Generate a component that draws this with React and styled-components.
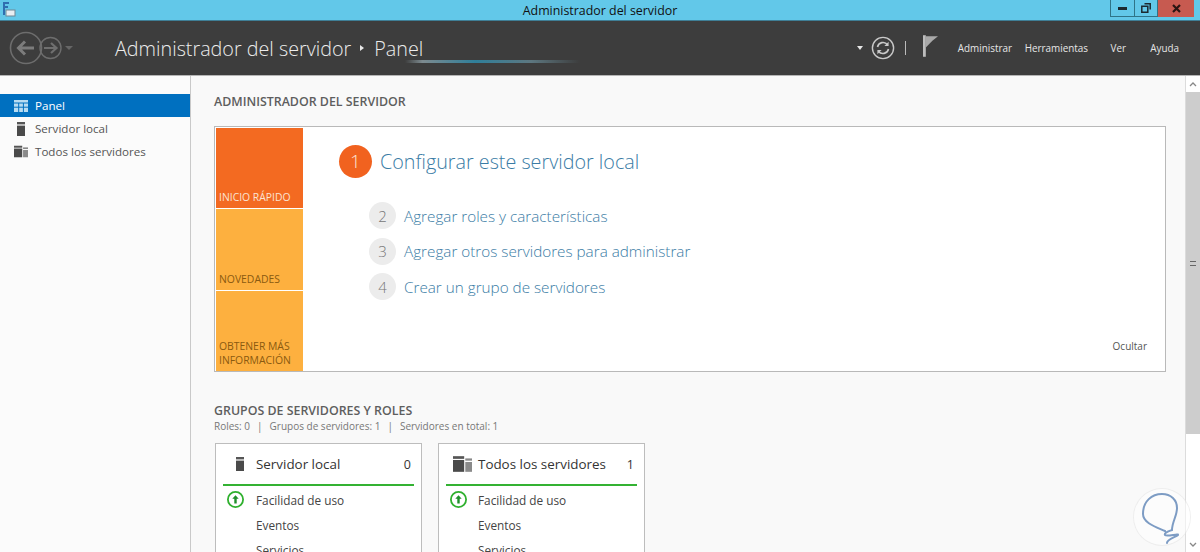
import styled, { createGlobalStyle } from "styled-components"

const Global = createGlobalStyle`
html, body { margin: 0; padding: 0; height: 100%; overflow: hidden; }
body { font-family: "Open Sans", "Noto Sans", sans-serif; background: #f9f9f9; color: #444; }
`

const Page = styled.div`
width: 1200px;
height: 552px;
display: flex;
flex-direction: column;
overflow: hidden;
position: relative;
`

const TitleBar = styled.div`
height: 20px;
background: #62c8e9;
border-bottom: 1px solid #3f7f96;
box-sizing: content-box;
display: flex;
position: relative;
justify-content: center;
flex: none;
`
const TitleText = styled.div`
font-size: 12.4px;
line-height: 21px;
color: #111;
`
const AppIcon = styled.svg`
position: absolute;
left: 1px;
top: 1px;
`
const WindowButtons = styled.div`
position: absolute;
right: 6px;
top: 0;
height: 17px;
display: flex;
`
const WinButton = styled.div`
width: ${props => props.w}px;
height: 17px;
box-sizing: border-box;
display: flex;
align-items: center;
justify-content: center;
background: ${props => props.close ? "#c75a50" : "transparent"};
border: ${props => props.close ? "none" : "1px solid #2f7488"};
border-top: none;
border-left-width: ${props => props.first ? 1 : 0}px;
`

const NavBar = styled.div`
height: 55px;
background: #3d3d3d;
border-bottom: 1px solid #b5b5b5;
display: flex;
align-items: center;
padding: 0 21px 0 9px;
box-sizing: border-box;
position: relative;
flex: none;
`
const NavArrows = styled.svg`
flex: none;
`
const Breadcrumb = styled.div`
margin-left: 30px;
display: flex;
align-items: center;
font-size: 19.75px;
font-weight: 300;
color: #ececec;
white-space: nowrap;
`
const Caret = styled.span`
width: 0;
height: 0;
border-left: 4px solid #e8e8e8;
border-top: 3px solid transparent;
border-bottom: 3px solid transparent;
margin: 0 10px 0 9px;
`
const Progress = styled.div`
position: absolute;
left: 405px;
top: 39px;
width: 175px;
height: 3px;
background: linear-gradient(90deg, transparent 0%, #7d8a8f 10%, #2f7f9a 40%, #5d7780 72%, transparent 100%);
`
const NavRight = styled.div`
margin-left: auto;
display: flex;
align-items: center;
`
const DropCaret = styled.span`
width: 0;
height: 0;
border-top: 4px solid #e8e8e8;
border-left: 3.5px solid transparent;
border-right: 3.5px solid transparent;
margin-right: 8px;
`
const Divider = styled.span`
width: 1px;
height: 14px;
background: #bbb;
margin: 0 17px 0 10px;
`
const Flag = styled.svg`
margin-top: -4px;
`
const Menu = styled.span`
font-size: 9.9px;
color: #e6e6e6;
width: ${props => props.w}px;
text-align: right;
`

const Body = styled.div`
flex: 1;
display: flex;
min-height: 0;
`
const Sidebar = styled.div`
width: 190px;
flex: none;
background: #fbfbfb;
border-right: 1px solid #c9c9c9;
padding-top: 18px;
`
const SideItem = styled.div`
height: 23px;
display: flex;
align-items: center;
background: ${props => props.active ? "#0070c0" : "transparent"};
color: ${props => props.active ? "#fff" : "#555"};
font-size: 11.6px;
`
const SideIcon = styled.span`
width: 35px;
display: flex;
justify-content: center;
padding-left: 7px;
box-sizing: border-box;
flex: none;
`

const Main = styled.div`
flex: 1;
min-width: 0;
padding: 19px 0 0 23px;
`
const Heading = styled.div`
font-size: 12.4px;
font-weight: 600;
color: #5e5e5e;
line-height: 14px;
`
const Welcome = styled.div`
margin-top: 17px;
width: 949px;
height: 243px;
box-sizing: content-box;
background: #fff;
border: 1px solid #b9b9b9;
padding: 1px 0 0 1px;
display: flex;
`
const Tabs = styled.div`
width: 87px;
flex: none;
display: flex;
flex-direction: column;
gap: 1px;
`
const Tab = styled.div`
flex: 1;
background: ${props => props.active ? "#f36a21" : "#fdb03f"};
color: ${props => props.active ? "#fbe3d2" : "#8a5a10"};
font-size: 10.4px;
line-height: 14px;
padding: 0 3px 4px 3px;
display: flex;
align-items: flex-end;
`
const Steps = styled.div`
flex: 1;
position: relative;
padding: 17px 0 0 36px;
`
const LeadStep = styled.div`
display: flex;
align-items: center;
font-size: 19.75px;
font-weight: 300;
color: #3a7ca5;
height: 32px;
`
const Num = styled.span`
flex: none;
display: flex;
align-items: center;
justify-content: center;
width: ${props => props.lead ? 33 : 27}px;
height: ${props => props.lead ? 33 : 27}px;
border-radius: 50%;
background: ${props => props.lead ? "#f1621f" : "#ececec"};
color: ${props => props.lead ? "#fce3d3" : "#777"};
font-size: ${props => props.lead ? 19 : 15}px;
font-weight: 300;
margin-right: ${props => props.lead ? 8 : 8}px;
`
const StepList = styled.div`
margin: 25px 0 0 30px;
display: flex;
flex-direction: column;
gap: 8.5px;
`
const Step = styled.div`
display: flex;
align-items: center;
font-size: 15.25px;
font-weight: 300;
color: #3a7ca5;
height: 27px;
`
const Hide = styled.div`
position: absolute;
right: 18px;
bottom: 18px;
font-size: 10px;
color: #555;
`

const GroupHeading = styled(Heading)`
margin-top: 32px;
`
const Summary = styled.div`
font-size: 10px;
color: #777;
line-height: 13px;
margin-top: 2px;
display: flex;
gap: 7px;
`
const Cards = styled.div`
margin-top: 10px;
margin-left: 1px;
display: flex;
gap: 16px;
`
const Card = styled.div`
width: 207px;
height: 140px;
background: #fff;
border: 1px solid #bdbdbd;
box-sizing: border-box;
padding: 0 7px;
`
const CardHead = styled.div`
height: 40px;
border-bottom: 2px solid #34b233;
margin-bottom: 1px;
box-sizing: content-box;
display: flex;
align-items: center;
font-size: 13.4px;
color: #333;
`
const CardIcon = styled.span`
width: ${props => props.w}px;
flex: none;
display: flex;
justify-content: center;
`
const Count = styled.span`
margin-left: auto;
margin-right: 3px;
font-size: 12.5px;
`
const CardRow = styled.div`
height: 25px;
display: flex;
align-items: center;
font-size: 11.8px;
color: #444;
padding-left: ${props => props.inset}px;
position: relative;
`
const Status = styled.svg`
position: absolute;
left: 3px;
top: 3px;
`

const Scrollbar = styled.div`
width: 14px;
flex: none;
background: #fff;
border-left: 1px solid #dcdcdc;
display: flex;
flex-direction: column;
`
const ScrollArrow = styled.div`
height: 16px;
display: flex;
align-items: center;
justify-content: center;
flex: none;
`
const Thumb = styled.div`
height: 342px;
background: #cdcdcd;
display: flex;
align-items: center;
justify-content: center;
flex: none;
`
const Grip = styled.span`
width: 6px;
height: 5px;
border-top: 1px solid #666;
border-bottom: 1px solid #666;
box-sizing: border-box;
`
const ScrollRest = styled.div`
flex: 1;
`

const Watermark = styled.div`
position: absolute;
left: 1134px;
top: 489px;
width: 56px;
height: 56px;
border-radius: 50%;
background: rgba(255,255,255,0.55);
box-shadow: 0 0 0 1px rgba(230,230,230,0.6);
`

const PanelIcon = () => (
  <svg width="14" height="12" viewBox="0 0 14 12">
    <rect width="14" height="12" fill="#b7dcf2" />
    <path d="M0 3h14M0 7.2h14M4.7 3v9M9.4 3v9" stroke="#0070c0" strokeWidth="1" />
  </svg>
)
const ServerIcon = ({ h = 14 }) => (
  <svg width="8" height={h} viewBox="0 0 8 14">
    <rect width="8" height="2.4" fill="#555" />
    <rect y="3.6" width="8" height="10.4" fill="#4a4a4a" />
  </svg>
)
const ServersIcon = ({ w = 14, h = 13 }) => (
  <svg width={w} height={h} viewBox="0 0 17 14">
    <rect width="10" height="2.4" fill="#555" />
    <rect y="3.4" width="10" height="10.6" fill="#4a4a4a" />
    <rect x="11" y="2" width="6" height="2" fill="#888" />
    <rect x="11" y="5.2" width="6" height="8.8" fill="#8a8a8a" />
  </svg>
)
const UpIcon = () => (
  <Status width="19" height="19" viewBox="0 0 19 19">
    <circle cx="9.5" cy="9.5" r="7.6" fill="none" stroke="#2fb02e" strokeWidth="1.8" />
    <path d="M9.5 5.2l3.2 3.6h-2v4.6h-2.4V8.8h-2z" fill="#1f8f2a" />
  </Status>
)

const rows = ["Facilidad de uso", "Eventos", "Servicios"]

const ServerCard = ({ icon, name, count, inset }) => (
  <Card>
    <CardHead>
      <CardIcon w={inset}>{icon}</CardIcon>
      {name}
      <Count>{count}</Count>
    </CardHead>
    {rows.map((r, i) => (
      <CardRow key={r} inset={inset}>
        {i === 0 && <UpIcon />}
        {r}
      </CardRow>
    ))}
  </Card>
)

const App = () => {
  return (
    <Page>
      <Global />
      <TitleBar>
        <AppIcon width="16" height="16" viewBox="0 0 16 16">
          <path d="M2 1h6v2H4v2h3v2H4v7H2z" fill="#2f6fb0" />
          <rect x="5" y="9" width="9" height="6" fill="#e8eef2" stroke="#6f8795" strokeWidth="1" />
        </AppIcon>
        <TitleText>Administrador del servidor</TitleText>
        <WindowButtons>
          <WinButton w={25} first>
            <svg width="9" height="3" viewBox="0 0 9 3"><rect width="9" height="3" fill="#1c2a30" /></svg>
          </WinButton>
          <WinButton w={23}>
            <svg width="10" height="10" viewBox="0 0 10 10">
              <path d="M3.5 0.8h5.7v5.7M0.8 3.2h6v6h-6z" fill="none" stroke="#1c2a30" strokeWidth="1.5" />
            </svg>
          </WinButton>
          <WinButton w={36} close>
            <svg width="9" height="9" viewBox="0 0 9 9">
              <path d="M1 1l7 7M8 1l-7 7" stroke="#2a1512" strokeWidth="2.2" />
            </svg>
          </WinButton>
        </WindowButtons>
      </TitleBar>

      <NavBar>
        <NavArrows width="76" height="34" viewBox="0 0 76 34">
          <circle cx="17" cy="17" r="15.5" fill="none" stroke="#6d6d6d" strokeWidth="1.6" />
          <path d="M25 17H10M16 10.5L9.5 17l6.5 6.5" fill="none" stroke="#7c7c7c" strokeWidth="3" />
          <circle cx="41.5" cy="17" r="10.5" fill="none" stroke="#6d6d6d" strokeWidth="1.4" />
          <path d="M35 17h12M42 12l5.5 5-5.5 5" fill="none" stroke="#6f6f6f" strokeWidth="2.2" />
          <path d="M56 15h8l-4 4z" fill="#666" />
        </NavArrows>
        <Breadcrumb>
          Administrador del servidor<Caret />Panel
        </Breadcrumb>
        <Progress />
        <NavRight>
          <DropCaret />
          <svg width="24" height="24" viewBox="0 0 24 24">
            <circle cx="12" cy="12" r="10.6" fill="none" stroke="#c9c9c9" strokeWidth="1.4" />
            <path d="M6.5 11a5.6 5.6 0 0 1 10-2.2M17.5 13a5.6 5.6 0 0 1-10 2.2" fill="none" stroke="#c9c9c9" strokeWidth="1.6" />
            <path d="M17.6 5.8v4.2h-4.2zM6.4 18.2V14h4.2z" fill="#c9c9c9" />
          </svg>
          <Divider />
          <Flag width="15" height="22" viewBox="0 0 16 23">
            <path d="M0 0h3v23H0z" fill="#bdbdbd" />
            <path d="M3 1h13l-6 5-7 7z" fill="#a9a9a9" />
          </Flag>
          <Menu w={74}>Administrar</Menu>
          <Menu w={76}>Herramientas</Menu>
          <Menu w={38}>Ver</Menu>
          <Menu w={53}>Ayuda</Menu>
        </NavRight>
      </NavBar>

      <Body>
        <Sidebar>
          <SideItem active><SideIcon><PanelIcon /></SideIcon>Panel</SideItem>
          <SideItem><SideIcon><ServerIcon /></SideIcon>Servidor local</SideItem>
          <SideItem><SideIcon><ServersIcon /></SideIcon>Todos los servidores</SideItem>
        </Sidebar>

        <Main>
          <Heading>ADMINISTRADOR DEL SERVIDOR</Heading>
          <Welcome>
            <Tabs>
              <Tab active>INICIO RÁPIDO</Tab>
              <Tab>NOVEDADES</Tab>
              <Tab>OBTENER MÁS INFORMACIÓN</Tab>
            </Tabs>
            <Steps>
              <LeadStep><Num lead>1</Num>Configurar este servidor local</LeadStep>
              <StepList>
                <Step><Num>2</Num>Agregar roles y características</Step>
                <Step><Num>3</Num>Agregar otros servidores para administrar</Step>
                <Step><Num>4</Num>Crear un grupo de servidores</Step>
              </StepList>
              <Hide>Ocultar</Hide>
            </Steps>
          </Welcome>
          <GroupHeading>GRUPOS DE SERVIDORES Y ROLES</GroupHeading>
          <Summary>
            <span>Roles: 0</span><span>|</span>
            <span>Grupos de servidores: 1</span><span>|</span>
            <span>Servidores en total: 1</span>
          </Summary>
          <Cards>
            <ServerCard icon={<ServerIcon h={16} />} name="Servidor local" count={0} inset={33} />
            <ServerCard icon={<ServersIcon w={19} h={16} />} name="Todos los servidores" count={1} inset={32} />
          </Cards>
        </Main>

        <Scrollbar>
          <ScrollArrow>
            <svg width="8" height="5" viewBox="0 0 8 5"><path d="M1 4l3-3 3 3" fill="none" stroke="#888" strokeWidth="1.3" /></svg>
          </ScrollArrow>
          <Thumb><Grip /></Thumb>
          <ScrollRest />
          <ScrollArrow>
            <svg width="8" height="5" viewBox="0 0 8 5"><path d="M1 1l3 3 3-3" fill="none" stroke="#888" strokeWidth="1.3" /></svg>
          </ScrollArrow>
        </Scrollbar>
      </Body>

      <Watermark>
        <svg width="56" height="56" viewBox="0 0 56 56">
          <path d="M31 42C22 38 9 34 9 25C9 12 18 5 28 5C37 5 43 11 43 19C43 27 38 33 38 41C33 43 30 44 31 46C33 48 45 44 44 46C42 48 33 50 33 54"
            fill="none" stroke="#7d9cc4" strokeWidth="2" strokeLinecap="round" />
        </svg>
      </Watermark>
    </Page>
  )
}

export default App
